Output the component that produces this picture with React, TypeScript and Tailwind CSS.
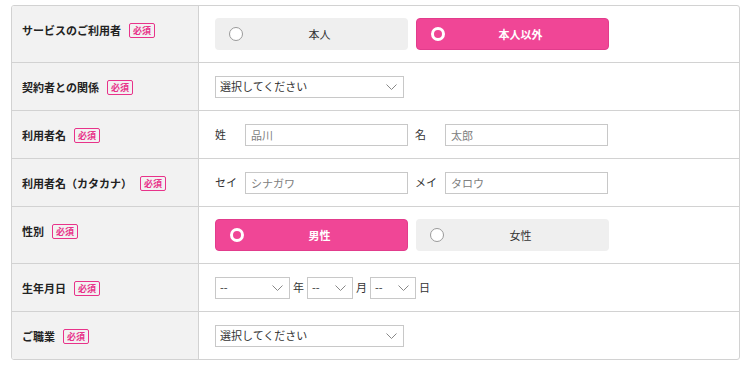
import { useState } from "react"

const font = { fontFamily: '"Noto Sans CJK JP", "Noto Sans", sans-serif' }

function Badge() {
  return (
    <span className="ml-[8px] flex h-[15px] items-center rounded-[2px] border border-[#e8338a] px-[3px] text-[9px] font-bold leading-none text-[#e8338a]">
      必須
    </span>
  )
}

function Chevron() {
  return (
    <svg width="11" height="6" viewBox="0 0 11 6" className="pointer-events-none absolute right-[6px] top-1/2 -translate-y-1/2">
      <path d="M0.5 0.5 L5.5 5.5 L10.5 0.5" fill="none" stroke="#888" strokeWidth="1" />
    </svg>
  )
}

function Select({ w, text }: { w: string; text: string }) {
  return (
    <div className={`relative flex h-[22px] items-center border border-[#c8c8c8] bg-white pl-[4px] text-[11px] text-[#333] ${w}`}>
      {text}
      <Chevron />
    </div>
  )
}

function Choice({ label, on, onClick }: { label: string; on: boolean; onClick: () => void }) {
  return (
    <button
      onClick={onClick}
      className={
        on
          ? "relative flex h-[32px] w-[193px] items-center justify-center rounded-[4px] border border-[#e23c8c] bg-[#f04696] text-[11px] font-bold text-white"
          : "relative flex h-[32px] w-[193px] items-center justify-center rounded-[4px] bg-[#efefef] text-[11px] text-[#333]"
      }
    >
      <span
        className={
          on
            ? "absolute left-[14px] top-1/2 h-[14px] w-[14px] -translate-y-1/2 rounded-full border-[3px] border-white"
            : "absolute left-[14px] top-1/2 h-[14px] w-[14px] -translate-y-1/2 rounded-full border border-[#9a9a9a] bg-white"
        }
      />
      <span className="ml-[16px]">{label}</span>
    </button>
  )
}

function Row({ label, h, last, children }: { label: string; h: string; last?: boolean; children: React.ReactNode }) {
  return (
    <div className={`grid grid-cols-[187px_1fr] ${h} ${last ? "" : "border-b border-[#d2d2d2]"}`}>
      <div className="border-r border-[#d2d2d2] bg-[#f2f2f2] pl-[10px] pt-[15px]">
        <div className="flex h-[18px] items-center">
          <span className="text-[11px] font-bold leading-[18px] text-[#222]">{label}</span>
          <Badge />
        </div>
      </div>
      <div className="flex items-center pl-[16px]">{children}</div>
    </div>
  )
}

function NameInput({ placeholder }: { placeholder: string }) {
  return (
    <input
      placeholder={placeholder}
      className="h-[22px] w-[163px] border border-[#c8c8c8] bg-white px-[5px] text-[11px] text-[#333] outline-none placeholder:text-[#808080]"
    />
  )
}

export default function App() {
  const [user, setUser] = useState<number>(1)
  const [sex, setSex] = useState<number>(0)

  return (
    <div className="min-h-[365px] w-[750px] bg-white pt-[5px]" style={font}>
      <div className="ml-[11px] w-[729px] overflow-hidden rounded-[3px] border border-[#d2d2d2]">
        <Row label="サービスのご利用者" h="h-[57px]">
          <div className="flex gap-[8px]">
            <Choice label="本人" on={user === 0} onClick={() => setUser(0)} />
            <Choice label="本人以外" on={user === 1} onClick={() => setUser(1)} />
          </div>
        </Row>
        <Row label="契約者との関係" h="h-[48px]">
          <Select w="w-[189px]" text="選択してください" />
        </Row>
        <Row label="利用者名" h="h-[48px]">
          <span className="w-[30px] text-[11px] text-[#333]">姓</span>
          <NameInput placeholder="品川" />
          <span className="ml-[7px] w-[30px] text-[11px] text-[#333]">名</span>
          <NameInput placeholder="太郎" />
        </Row>
        <Row label="利用者名（カタカナ）" h="h-[48px]">
          <span className="w-[30px] text-[11px] text-[#333]">セイ</span>
          <NameInput placeholder="シナガワ" />
          <span className="ml-[7px] w-[30px] text-[11px] text-[#333]">メイ</span>
          <NameInput placeholder="タロウ" />
        </Row>
        <Row label="性別" h="h-[57px]">
          <div className="flex gap-[8px]">
            <Choice label="男性" on={sex === 0} onClick={() => setSex(0)} />
            <Choice label="女性" on={sex === 1} onClick={() => setSex(1)} />
          </div>
        </Row>
        <Row label="生年月日" h="h-[48px]">
          <Select w="w-[75px]" text="--" />
          <span className="mx-[3px] text-[11px] text-[#333]">年</span>
          <Select w="w-[46px]" text="--" />
          <span className="mx-[3px] text-[11px] text-[#333]">月</span>
          <Select w="w-[46px]" text="--" />
          <span className="mx-[3px] text-[11px] text-[#333]">日</span>
        </Row>
        <Row label="ご職業" h="h-[47px]" last>
          <Select w="w-[189px]" text="選択してください" />
        </Row>
      </div>
    </div>
  )
}
